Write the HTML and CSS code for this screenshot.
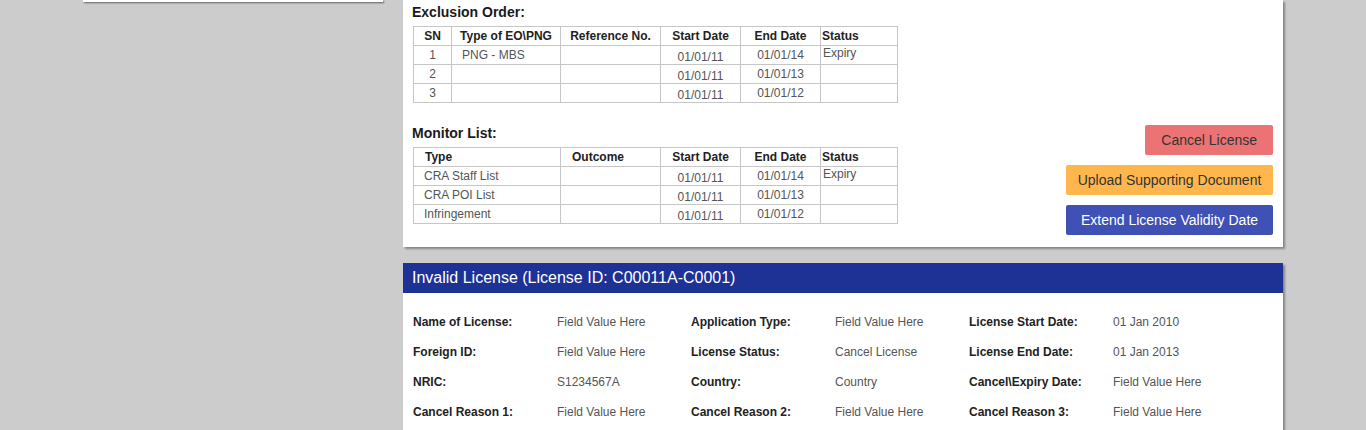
FILE: index.html
```html
<!DOCTYPE html>
<html>
<head>
<meta charset="utf-8">
<link rel="stylesheet" href="styles.css">
</head>
<body>
<div class="page">
  <aside class="sidebar"></aside>
  <main class="main">
    <section class="card top-card">
      <div class="lists">
        <h3 class="list-title">Exclusion Order:</h3>
        <table class="grid-table">
          <colgroup><col style="width:38px"><col style="width:109px"><col style="width:100px"><col style="width:80px"><col style="width:80px"><col style="width:77px"></colgroup>
          <thead>
            <tr><th class="c">SN</th><th class="c">Type of EO\PNG</th><th class="c">Reference No.</th><th class="c">Start Date</th><th class="c">End Date</th><th class="l1">Status</th></tr>
          </thead>
          <tbody>
            <tr><td class="c">1</td><td class="l10">PNG - MBS</td><td></td><td class="c low">01/01/11</td><td class="c">01/01/14</td><td class="l2 high">Expiry</td></tr>
            <tr><td class="c">2</td><td></td><td></td><td class="c low">01/01/11</td><td class="c">01/01/13</td><td></td></tr>
            <tr><td class="c">3</td><td></td><td></td><td class="c low">01/01/11</td><td class="c">01/01/12</td><td></td></tr>
          </tbody>
        </table>
        <h3 class="list-title second">Monitor List:</h3>
        <table class="grid-table">
          <colgroup><col style="width:147px"><col style="width:100px"><col style="width:80px"><col style="width:80px"><col style="width:77px"></colgroup>
          <thead>
            <tr><th class="l11">Type</th><th class="l11">Outcome</th><th class="c">Start Date</th><th class="c">End Date</th><th class="l1">Status</th></tr>
          </thead>
          <tbody>
            <tr><td class="l10">CRA Staff List</td><td></td><td class="c low">01/01/11</td><td class="c">01/01/14</td><td class="l2 high">Expiry</td></tr>
            <tr><td class="l10">CRA POI List</td><td></td><td class="c low">01/01/11</td><td class="c">01/01/13</td><td></td></tr>
            <tr><td class="l10">Infringement</td><td></td><td class="c low">01/01/11</td><td class="c">01/01/12</td><td></td></tr>
          </tbody>
        </table>
      </div>
      <div class="actions">
        <button class="btn btn-cancel">Cancel License</button>
        <button class="btn btn-wide btn-upload">Upload Supporting Document</button>
        <button class="btn btn-wide btn-extend">Extend License Validity Date</button>
      </div>
    </section>

    <section class="card info-card">
      <div class="info-header">Invalid License (License ID: C00011A-C0001)</div>
      <div class="info-body">
        <div class="lbl">Name of License:</div><div class="val">Field Value Here</div>
        <div class="lbl">Application Type:</div><div class="val">Field Value Here</div>
        <div class="lbl">License Start Date:</div><div class="val">01 Jan 2010</div>

        <div class="lbl">Foreign ID:</div><div class="val">Field Value Here</div>
        <div class="lbl">License Status:</div><div class="val">Cancel License</div>
        <div class="lbl">License End Date:</div><div class="val">01 Jan 2013</div>

        <div class="lbl">NRIC:</div><div class="val">S1234567A</div>
        <div class="lbl">Country:</div><div class="val">Country</div>
        <div class="lbl">Cancel\Expiry Date:</div><div class="val">Field Value Here</div>

        <div class="lbl">Cancel Reason 1:</div><div class="val">Field Value Here</div>
        <div class="lbl">Cancel Reason 2:</div><div class="val">Field Value Here</div>
        <div class="lbl">Cancel Reason 3:</div><div class="val">Field Value Here</div>
      </div>
    </section>
  </main>
</div>
</body>
</html>
```

FILE: styles.css
```css
* { box-sizing: border-box; }

html, body {
  margin: 0;
  padding: 0;
  background: #cccccc;
  font-family: "Liberation Sans", Arial, sans-serif;
  color: #222;
}

.page {
  display: flex;
  align-items: flex-start;
  gap: 20px;
  padding-left: 83px;
}

.sidebar {
  width: 300px;
  height: 2px;
  background: #fff;
  box-shadow: 1px 1px 2px rgba(0, 0, 0, 0.55);
}

.main {
  width: 880px;
  display: flex;
  flex-direction: column;
  gap: 16px;
}

.card {
  background: #fff;
  box-shadow: 2px 2px 2px rgba(0, 0, 0, 0.35);
}

.top-card {
  display: flex;
  justify-content: space-between;
  padding: 2px 10px 12px 10px;
}

.lists {
  padding-bottom: 11px;
}

.list-title {
  margin: 0 0 4px -1px;
  font-size: 14px;
  line-height: 20px;
  font-weight: bold;
  color: #1a1a1a;
}

.list-title.second {
  margin-top: 20px;
}

.grid-table {
  border-collapse: collapse;
  table-layout: fixed;
  width: 484px;
  font-size: 12px;
}

.grid-table th,
.grid-table td {
  border: 1px solid #c6c6c6;
  height: 19px;
  padding: 0;
  line-height: 17px;
  white-space: nowrap;
  overflow: hidden;
}

.grid-table th {
  font-weight: bold;
  color: #222;
}

.grid-table td {
  color: #555;
}

.c { text-align: center; }
.l1 { text-align: left; padding-left: 1px !important; }
.l2 { text-align: left; padding-left: 2px !important; }
.l10 { text-align: left; padding-left: 10px !important; }
.l11 { text-align: left; padding-left: 11px !important; }

.grid-table td.low {
  vertical-align: bottom;
  line-height: 13px;
}

.grid-table td.high {
  vertical-align: top;
  line-height: 14px;
}

.actions {
  align-self: flex-end;
  display: flex;
  flex-direction: column;
  align-items: flex-end;
  gap: 10px;
}

.btn {
  height: 30px;
  border: none;
  border-radius: 2px;
  font-family: "Liberation Sans", Arial, sans-serif;
  font-size: 14px;
  padding: 0 16px;
  color: #333;
}

.btn-wide {
  width: 207px;
  padding: 0;
}

.btn-cancel { background: #ec7373; }
.btn-upload { background: #ffb74d; }
.btn-extend { background: #3f51b5; color: #fff; }

.info-header {
  background: #1e3296;
  color: #fff;
  font-size: 16px;
  line-height: 30px;
  height: 30px;
  padding-left: 9px;
}

.info-body {
  display: grid;
  grid-template-columns: 144px 134px 144px 134px 144px 134px;
  grid-auto-rows: 30px;
  align-items: center;
  padding: 14px 10px 20px 10px;
  font-size: 12px;
}

.lbl {
  font-weight: bold;
  color: #222;
}

.val {
  color: #555;
}
```
